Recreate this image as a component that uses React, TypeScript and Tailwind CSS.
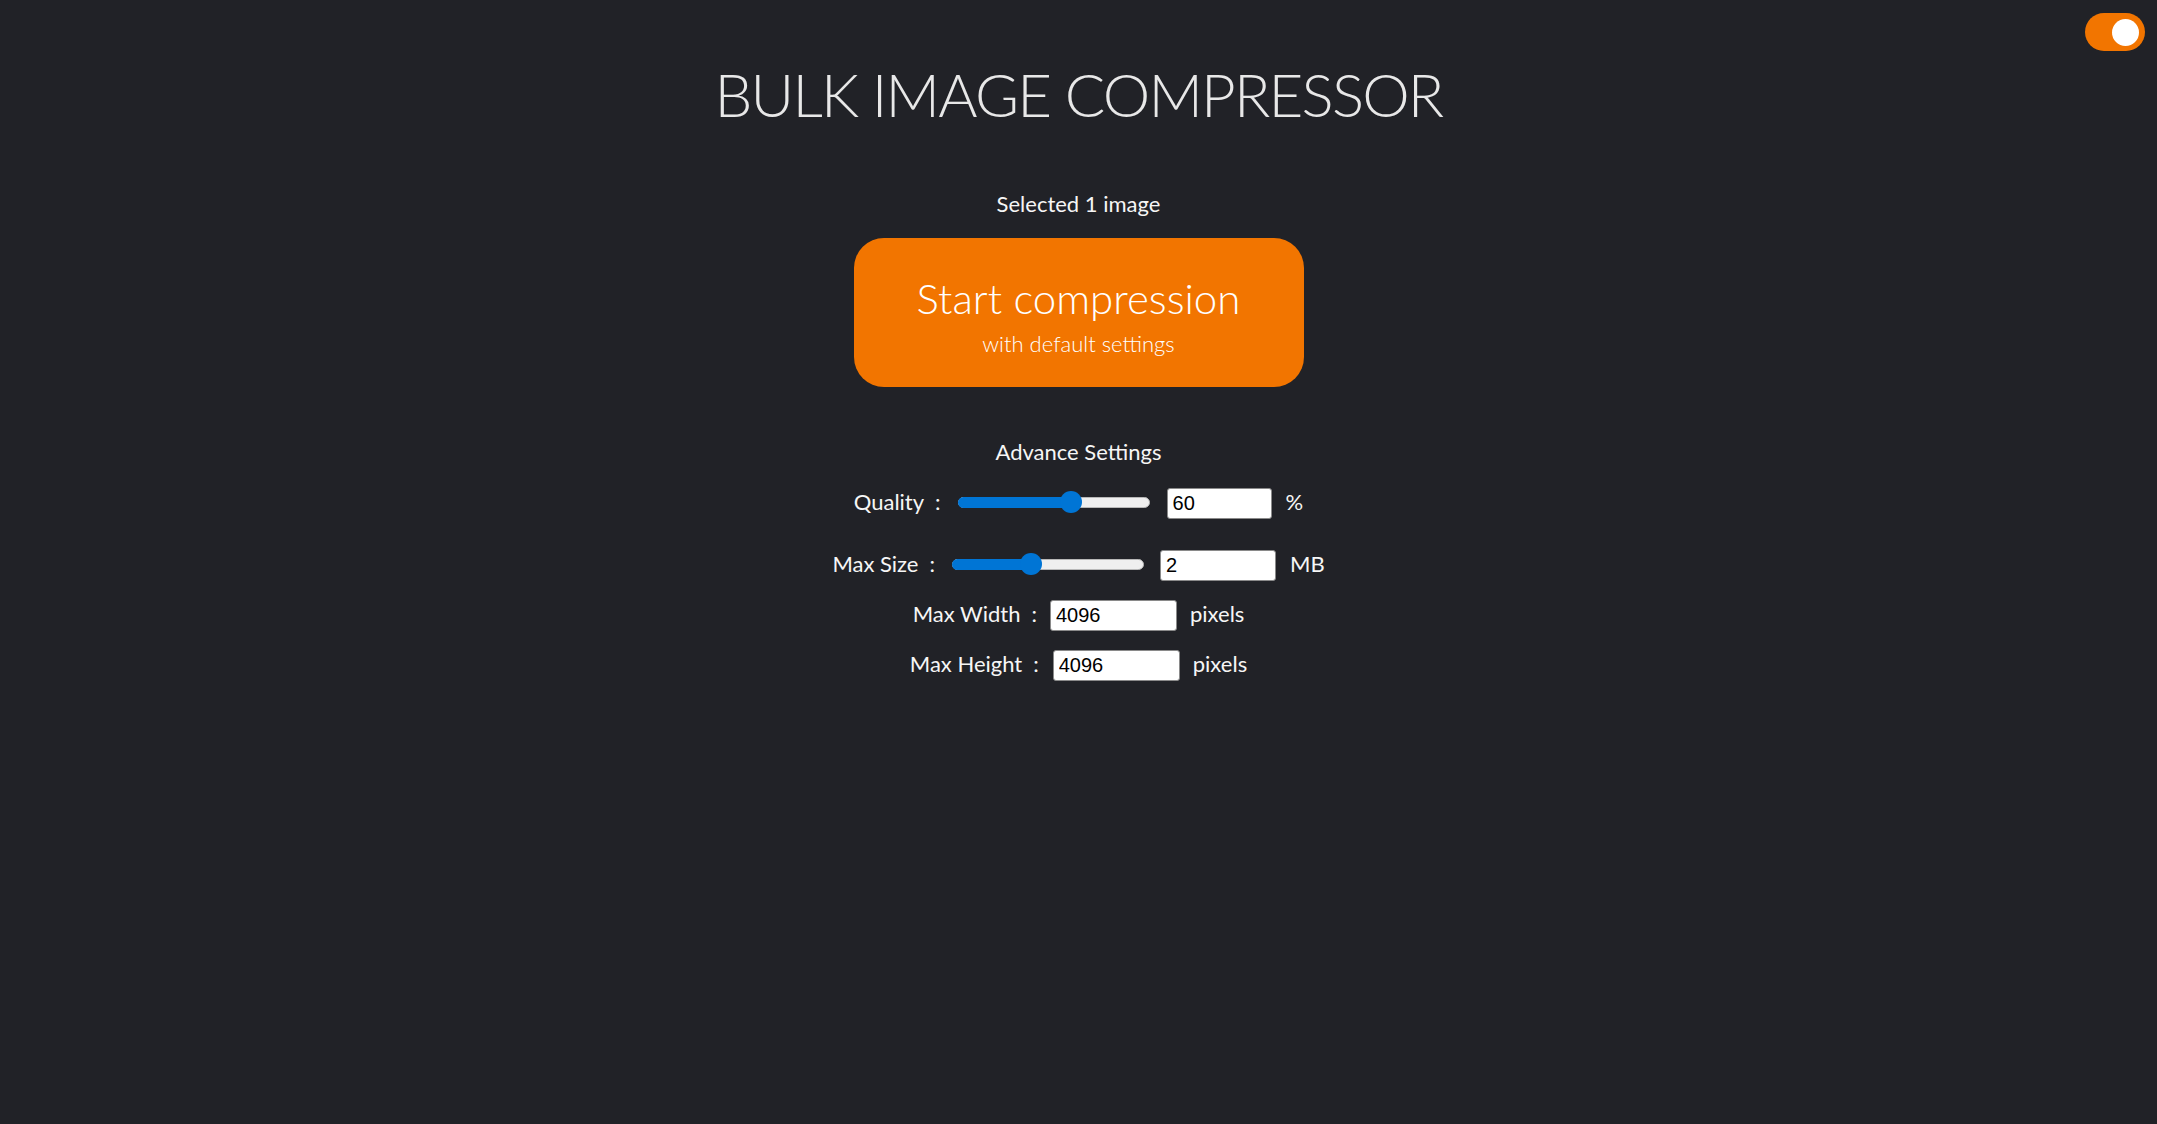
import { useState } from 'react';

// ─── Small pieces ────────────────────────────────────────────

function Slider({ value, min, max }: { value: number; min: number; max: number }) {
  const frac = (value - min) / (max - min);
  const center = 11 + frac * 170;
  return (
    <div className="relative h-[22px] w-[192px] shrink-0" role="slider" aria-valuenow={value}>
      <div className="absolute top-[5.5px] left-0 h-[11px] w-full rounded-full border border-[#b8b8b8] bg-[#efefef]" />
      <div
        className="absolute top-[5.5px] left-0 h-[11px] rounded-full bg-[#0075d5]"
        style={{ width: center }}
      />
      <div
        className="absolute top-0 h-[22px] w-[22px] rounded-full bg-[#0075d5]"
        style={{ left: center - 11 }}
      />
    </div>
  );
}

function NumberBox({ value, width }: { value: string; width: string }) {
  return (
    <input
      type="text"
      defaultValue={value}
      className={`${width} h-[31px] shrink-0 rounded-[3px] border border-[#8a8a8a] bg-white pl-[5px] font-['Liberation_Sans',Arial,sans-serif] text-[20px] text-black outline-none`}
    />
  );
}

function Label({ text }: { text: string }) {
  return (
    <span className="flex items-center leading-[26px]">
      <span>{text}</span>
      <span className="ml-[11px]">:</span>
    </span>
  );
}

// ─── Page ────────────────────────────────────────────────────

export default function App() {
  const [dark, setDark] = useState(true);

  return (
    <div className="relative min-h-screen w-full bg-[#212227] font-['Lato','Noto_Sans',sans-serif] text-[#f6f6f6]">
      <button
        type="button"
        onClick={() => setDark(!dark)}
        className="absolute top-[13px] right-[12px] h-[38px] w-[60px] rounded-full bg-[#f27500]"
        aria-label="Toggle theme"
      >
        <span className="absolute top-[5.5px] right-[6px] h-[27px] w-[27px] rounded-full bg-white" />
      </button>

      <div className="flex flex-col items-center pt-[64px]">
        <h1 className="text-[60px] leading-[60px] font-light tracking-[-1.8px] text-[#e8e8e8]">
          BULK IMAGE COMPRESSOR
        </h1>

        <p className="mt-[67px] text-[22px] leading-[26px]">Selected 1 image</p>

        <button
          type="button"
          className="mt-[21px] flex h-[149px] w-[450px] flex-col items-center rounded-[30px] bg-[#f27500] pt-[38px] text-white"
        >
          <span className="text-[42px] leading-[44px] font-light">Start compression</span>
          <span className="mt-[11px] text-[22px] leading-[26px] font-light">with default settings</span>
        </button>

        <p className="mt-[52px] text-[22px] leading-[26px]">Advance Settings</p>

        <div className="mt-[20px] flex h-[34px] items-center text-[22px]">
          <Label text="Quality" />
          <div className="ml-[17px]">
            <Slider value={60} min={0} max={100} />
          </div>
          <div className="ml-[17px]">
            <NumberBox value="60" width="w-[105px]" />
          </div>
          <span className="ml-[14px] leading-[26px]">%</span>
        </div>

        <div className="mt-[28px] flex h-[34px] items-center text-[22px]">
          <Label text="Max Size" />
          <div className="ml-[17px]">
            <Slider value={2} min={0} max={5} />
          </div>
          <div className="ml-[16px]">
            <NumberBox value="2" width="w-[116px]" />
          </div>
          <span className="ml-[14px] leading-[26px]">MB</span>
        </div>

        <div className="mt-[16px] flex h-[34px] items-center text-[22px]">
          <Label text="Max Width" />
          <div className="ml-[13px]">
            <NumberBox value="4096" width="w-[127px]" />
          </div>
          <span className="ml-[13px] leading-[26px]">pixels</span>
        </div>

        <div className="mt-[16px] flex h-[34px] items-center text-[22px]">
          <Label text="Max Height" />
          <div className="ml-[14px]">
            <NumberBox value="4096" width="w-[127px]" />
          </div>
          <span className="ml-[13px] leading-[26px]">pixels</span>
        </div>
      </div>
    </div>
  );
}
